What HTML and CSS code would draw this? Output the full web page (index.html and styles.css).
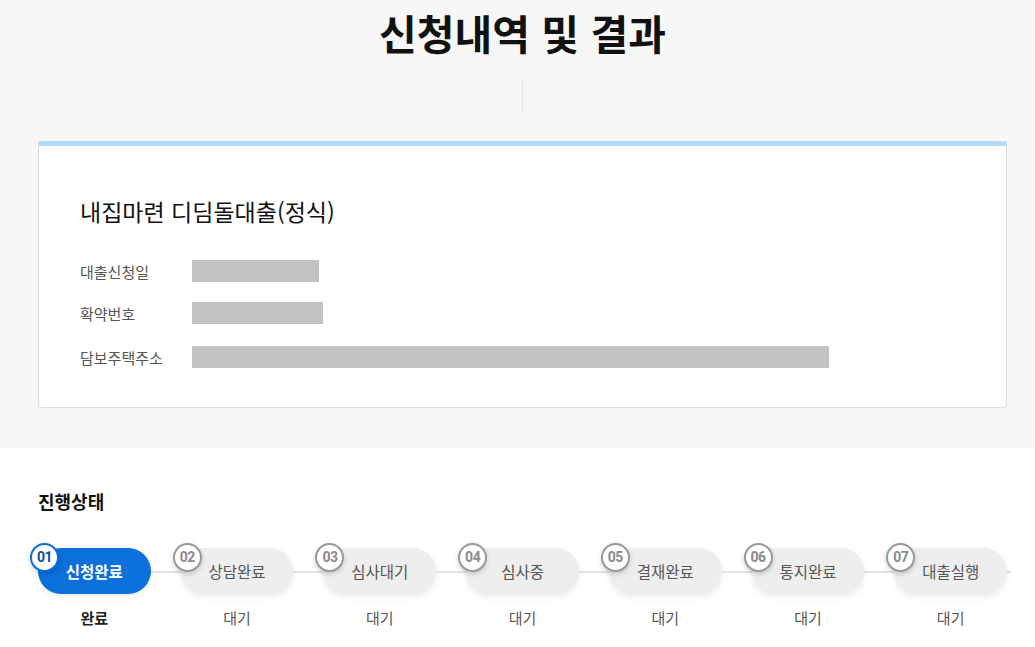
FILE: index.html
```html
<!doctype html>
<html lang="ko">
<head>
	<meta charset="utf-8"/>
	<title>신청내역 및 결과</title>
	<link rel="stylesheet" href="styles.css">
</head>
<body>
	<div class="top">
		<div class="wrap">
			<h1 class="page-title">신청내역 및 결과</h1>
			<div class="divider"></div>
			<div class="card">
				<h2 class="card-title">내집마련 디딤돌대출(정식)</h2>
				<dl class="info">
					<div class="info-row">
						<dt>대출신청일</dt>
						<dd><span class="mask mask-date"></span></dd>
					</div>
					<div class="info-row">
						<dt>확약번호</dt>
						<dd><span class="mask mask-no"></span></dd>
					</div>
					<div class="info-row">
						<dt>담보주택주소</dt>
						<dd><span class="mask mask-addr"></span></dd>
					</div>
				</dl>
			</div>
		</div>
	</div>
	<div class="bottom">
		<div class="wrap">
			<h3 class="section-title">진행상태</h3>
			<ol class="steps">
				<li class="step done">
					<div class="pill"><span class="num">01</span>신청완료</div>
					<p class="state">완료</p>
				</li>
				<li class="step">
					<div class="pill"><span class="num">02</span>상담완료</div>
					<p class="state">대기</p>
				</li>
				<li class="step">
					<div class="pill"><span class="num">03</span>심사대기</div>
					<p class="state">대기</p>
				</li>
				<li class="step">
					<div class="pill"><span class="num">04</span>심사중</div>
					<p class="state">대기</p>
				</li>
				<li class="step">
					<div class="pill"><span class="num">05</span>결재완료</div>
					<p class="state">대기</p>
				</li>
				<li class="step">
					<div class="pill"><span class="num">06</span>통지완료</div>
					<p class="state">대기</p>
				</li>
				<li class="step">
					<div class="pill"><span class="num">07</span>대출실행</div>
					<p class="state">대기</p>
				</li>
			</ol>
		</div>
	</div>
</body>
</html>
```

FILE: styles.css
```css
body {
    margin: 0;
    font-family: "Noto Sans CJK KR", "Noto Sans", sans-serif;
    color: #222;
    background: #fff;
}
h1, h2, h3, p, dl, dd, ol {
    margin: 0;
    padding: 0;
}

/* layouts */
.wrap {
    margin: 0 28px 0 38px;
}
.top {
    background: #f7f7f7;
    padding: 6px 0 40px;
}
.bottom {
    padding: 35px 0 20px;
}

.page-title {
    text-align: center;
    font-size: 41px;
    line-height: 52px;
    font-weight: 700;
    color: #111;
}
.divider {
    width: 1px;
    height: 31px;
    margin: 22px auto 30px;
    background: #e4e4e4;
}

.card {
    background: #fff;
    border: 1px solid #dddddd;
    border-top: 5px solid #b0dcfa;
    border-radius: 3px;
    padding: 49px 41px 39px;
}
.card-title {
    font-size: 23px;
    font-weight: 400;
    line-height: 32px;
    color: #111;
    margin-bottom: 33px;
}
.info-row {
    display: flex;
    align-items: center;
    height: 22px;
    margin-bottom: 20px;
}
.info-row:nth-child(2) {
    margin-bottom: 22px;
}
.info-row:last-child {
    margin-bottom: 0;
}
.info dt {
    width: 112px;
    font-size: 15px;
    color: #555;
}
.mask {
    display: block;
    height: 22px;
    background: #c3c3c3;
}
.mask-date { width: 127px; }
.mask-no { width: 131px; }
.mask-addr { width: 637px; }

.section-title {
    font-size: 18px;
    font-weight: 700;
    line-height: 36px;
    color: #111;
    margin-bottom: 29px;
}

.steps {
    list-style: none;
    display: flex;
    gap: 30px;
    position: relative;
}
.steps::before {
    content: "";
    position: absolute;
    left: 20px;
    right: -4px;
    top: 23px;
    height: 2px;
    background: #e4e4e4;
}
.step {
    width: 113px;
    position: relative;
}
.pill {
    position: relative;
    height: 46px;
    border-radius: 23px;
    background: #eeeeee;
    box-shadow: 0 3px 7px rgba(0, 0, 0, 0.08);
    display: flex;
    align-items: center;
    justify-content: center;
    font-size: 15.5px;
    color: #555;
}
.num {
    position: absolute;
    left: -8px;
    top: -5px;
    width: 25px;
    height: 25px;
    border: 2px solid #9a9a9a;
    border-radius: 50%;
    background: #fff;
    box-shadow: 0 2px 5px rgba(0, 0, 0, 0.18);
    font-family: Roboto, "Noto Sans", sans-serif;
    font-size: 14px;
    font-weight: 700;
    line-height: 25px;
    text-align: center;
    color: #8a8a8a;
    letter-spacing: -0.5px;
}
.state {
    text-align: center;
    font-size: 15px;
    line-height: 20px;
    margin-top: 14px;
    color: #555;
}
.done .pill {
    background: #0b6fdc;
    color: #fff;
    font-weight: 700;
}
.done .num {
    border-color: #0b6fdc;
    color: #0c4f9c;
}
.done .state {
    color: #222;
    font-weight: 700;
}
```
